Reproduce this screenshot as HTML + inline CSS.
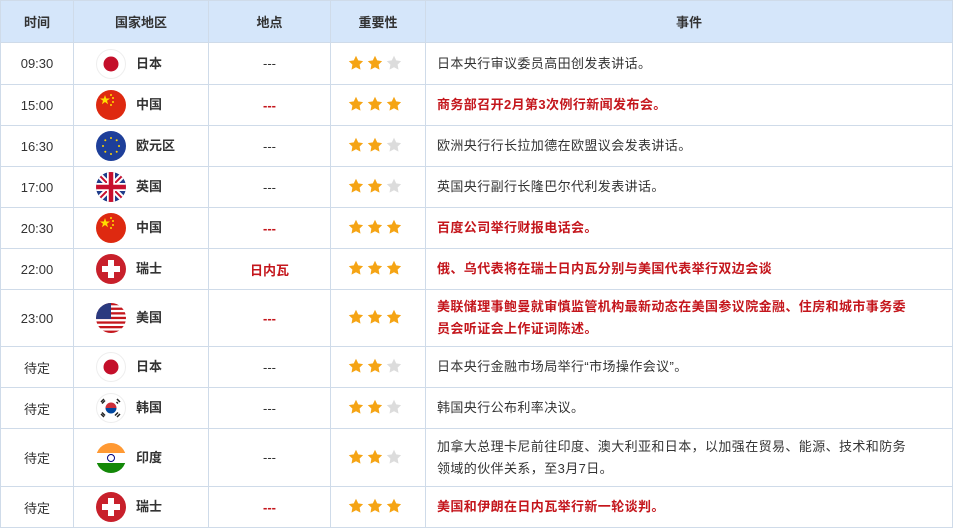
<!DOCTYPE html><html><head><meta charset="utf-8"><style>
body{margin:0;background:#fff;font-family:"Liberation Sans","Noto Sans CJK SC",sans-serif;font-size:13px;color:#333}
table{border-collapse:collapse;table-layout:fixed;width:953px}
td,th{border:1px solid #cfdbe9;text-align:center;padding:0}
th{background:#d5e6fa;height:41px;font-weight:bold;color:#333;font-size:13px}
td.e{text-align:left;padding:0 0 0 11px;line-height:22px;letter-spacing:0.4px;white-space:nowrap}
.r{color:#c4161c;font-weight:bold}
.c{text-align:left}
.c div{display:flex;align-items:center;padding-left:22px;height:30px}
.c svg{width:30px;height:30px;margin-right:10px;flex:none}
.c b{font-weight:bold;color:#333;line-height:16px;display:block}
.s{padding-right:8px}
.s svg{width:15px;height:15px;margin:0 2px;vertical-align:middle;position:relative;top:-2px}
.dr{color:#c4161c;font-weight:bold}
</style></head><body>
<svg width="0" height="0" style="position:absolute"><defs>
<path id="st" d="M8 0.8l2.2 4.6 5 .7-3.6 3.5.9 5-4.5-2.4-4.5 2.4.9-5L.8 6.1l5-.7z"/>
<clipPath id="cc"><circle cx="15" cy="15" r="15"/></clipPath>
<g id="jp"><circle cx="15" cy="15" r="14.5" fill="#fff" stroke="#eee"/><circle cx="15" cy="15" r="7.5" fill="#c40f2a"/></g>
<g id="cn"><circle cx="15" cy="15" r="15" fill="#de2910"/><polygon points="9,5 10.2,8.5 14,8.5 11,10.7 12.1,14.2 9,12 5.9,14.2 7,10.7 4,8.5 7.8,8.5" fill="#ffde00"/><circle cx="15" cy="5" r="1" fill="#ffde00"/><circle cx="17" cy="8" r="1" fill="#ffde00"/><circle cx="17" cy="12" r="1" fill="#ffde00"/><circle cx="15" cy="15" r="1" fill="#ffde00"/></g>
<g id="ch"><circle cx="15" cy="15" r="15" fill="#c8202b"/><rect x="12" y="6" width="6" height="18" fill="#fff"/><rect x="6" y="12" width="18" height="6" fill="#fff"/></g>
<g id="us"><g clip-path="url(#cc)"><rect width="30" height="30" fill="#fff"/><rect y="0" width="30" height="2.3" fill="#c4161c"/><rect y="4.6" width="30" height="2.3" fill="#c4161c"/><rect y="9.2" width="30" height="2.3" fill="#c4161c"/><rect y="13.8" width="30" height="2.3" fill="#c4161c"/><rect y="18.4" width="30" height="2.3" fill="#c4161c"/><rect y="23" width="30" height="2.3" fill="#c4161c"/><rect y="27.6" width="30" height="2.4" fill="#c4161c"/><rect width="15" height="16" fill="#2b3a7f"/></g></g>
</defs></svg>
<table>
<colgroup><col style="width:73px"><col style="width:135px"><col style="width:122px"><col style="width:95px"><col></colgroup>
<tr><th>时间</th><th>国家地区</th><th>地点</th><th>重要性</th><th>事件</th></tr>
<tr style="height:42px"><td>09:30</td><td class="c"><div><svg><use href="#jp"/></svg><b>日本</b></div></td><td>---</td><td class="s"><svg fill="#f5a414"><use href="#st"/></svg><svg fill="#f5a414"><use href="#st"/></svg><svg fill="#dcdcdc"><use href="#st"/></svg></td><td class="e">日本央行审议委员高田创发表讲话。</td></tr>
<tr style="height:41px"><td>15:00</td><td class="c"><div><svg><use href="#cn"/></svg><b>中国</b></div></td><td class="dr">---</td><td class="s"><svg fill="#f5a414"><use href="#st"/></svg><svg fill="#f5a414"><use href="#st"/></svg><svg fill="#f5a414"><use href="#st"/></svg></td><td class="e r">商务部召开2月第3次例行新闻发布会。</td></tr>
<tr style="height:41px"><td>16:30</td><td class="c"><div><svg><circle cx="15" cy="15" r="15" fill="#1e3f9a"/><g fill="#ffd200"><circle cx="15" cy="7" r="1"/><circle cx="15" cy="23" r="1"/><circle cx="7" cy="15" r="1"/><circle cx="23" cy="15" r="1"/><circle cx="9.3" cy="9.3" r="1"/><circle cx="20.7" cy="9.3" r="1"/><circle cx="9.3" cy="20.7" r="1"/><circle cx="20.7" cy="20.7" r="1"/></g></svg><b>欧元区</b></div></td><td>---</td><td class="s"><svg fill="#f5a414"><use href="#st"/></svg><svg fill="#f5a414"><use href="#st"/></svg><svg fill="#dcdcdc"><use href="#st"/></svg></td><td class="e">欧洲央行行长拉加德在欧盟议会发表讲话。</td></tr>
<tr style="height:41px"><td>17:00</td><td class="c"><div><svg><g clip-path="url(#cc)"><rect width="30" height="30" fill="#1f3c8a"/><path d="M0 0L30 30M30 0L0 30" stroke="#fff" stroke-width="6"/><path d="M0 0L30 30M30 0L0 30" stroke="#c8102e" stroke-width="2"/><path d="M15 0V30M0 15H30" stroke="#fff" stroke-width="8"/><path d="M15 0V30M0 15H30" stroke="#c8102e" stroke-width="4.5"/></g></svg><b>英国</b></div></td><td>---</td><td class="s"><svg fill="#f5a414"><use href="#st"/></svg><svg fill="#f5a414"><use href="#st"/></svg><svg fill="#dcdcdc"><use href="#st"/></svg></td><td class="e">英国央行副行长隆巴尔代利发表讲话。</td></tr>
<tr style="height:41px"><td>20:30</td><td class="c"><div><svg><use href="#cn"/></svg><b>中国</b></div></td><td class="dr">---</td><td class="s"><svg fill="#f5a414"><use href="#st"/></svg><svg fill="#f5a414"><use href="#st"/></svg><svg fill="#f5a414"><use href="#st"/></svg></td><td class="e r">百度公司举行财报电话会。</td></tr>
<tr style="height:41px"><td>22:00</td><td class="c"><div><svg><use href="#ch"/></svg><b>瑞士</b></div></td><td class="r">日内瓦</td><td class="s"><svg fill="#f5a414"><use href="#st"/></svg><svg fill="#f5a414"><use href="#st"/></svg><svg fill="#f5a414"><use href="#st"/></svg></td><td class="e r">俄、乌代表将在瑞士日内瓦分别与美国代表举行双边会谈</td></tr>
<tr style="height:57px"><td>23:00</td><td class="c"><div><svg><use href="#us"/></svg><b>美国</b></div></td><td class="dr">---</td><td class="s"><svg fill="#f5a414"><use href="#st"/></svg><svg fill="#f5a414"><use href="#st"/></svg><svg fill="#f5a414"><use href="#st"/></svg></td><td class="e r">美联储理事鲍曼就审慎监管机构最新动态在美国参议院金融、住房和城市事务委<br>员会听证会上作证词陈述。</td></tr>
<tr style="height:41px"><td>待定</td><td class="c"><div><svg><use href="#jp"/></svg><b>日本</b></div></td><td>---</td><td class="s"><svg fill="#f5a414"><use href="#st"/></svg><svg fill="#f5a414"><use href="#st"/></svg><svg fill="#dcdcdc"><use href="#st"/></svg></td><td class="e">日本央行金融市场局举行“市场操作会议”。</td></tr>
<tr style="height:41px"><td>待定</td><td class="c"><div><svg><circle cx="15" cy="15" r="14.5" fill="#fff" stroke="#eee"/><path d="M9.5 15a5.5 5.5 0 0 1 11 0z" fill="#cd2e3a"/><path d="M9.5 15a5.5 5.5 0 0 0 11 0z" fill="#0047a0"/><g stroke="#222" stroke-width="1.5"><path d="M5 9l3-3M6 10.5l3-3M21 6l3 3M22 10.5l-1.5-1.5M5 21l3 3M6 19.5l3 3M21 24l3-3M22 19.5l-3 3"/></g></svg><b>韩国</b></div></td><td>---</td><td class="s"><svg fill="#f5a414"><use href="#st"/></svg><svg fill="#f5a414"><use href="#st"/></svg><svg fill="#dcdcdc"><use href="#st"/></svg></td><td class="e">韩国央行公布利率决议。</td></tr>
<tr style="height:58px"><td>待定</td><td class="c"><div><svg><g clip-path="url(#cc)"><rect width="30" height="10" fill="#ff9933"/><rect y="10" width="30" height="10" fill="#fff"/><rect y="20" width="30" height="10" fill="#138808"/></g><circle cx="15" cy="15" r="3.5" fill="none" stroke="#000080"/></svg><b>印度</b></div></td><td>---</td><td class="s"><svg fill="#f5a414"><use href="#st"/></svg><svg fill="#f5a414"><use href="#st"/></svg><svg fill="#dcdcdc"><use href="#st"/></svg></td><td class="e">加拿大总理卡尼前往印度、澳大利亚和日本，以加强在贸易、能源、技术和防务<br>领域的伙伴关系，至3月7日。</td></tr>
<tr style="height:41px"><td>待定</td><td class="c"><div><svg><use href="#ch"/></svg><b>瑞士</b></div></td><td class="dr">---</td><td class="s"><svg fill="#f5a414"><use href="#st"/></svg><svg fill="#f5a414"><use href="#st"/></svg><svg fill="#f5a414"><use href="#st"/></svg></td><td class="e r">美国和伊朗在日内瓦举行新一轮谈判。</td></tr>
</table></body></html>
